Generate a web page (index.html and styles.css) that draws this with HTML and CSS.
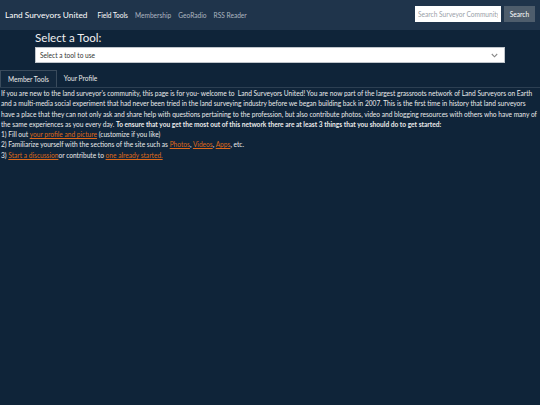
FILE: index.html
```html
<!DOCTYPE html>
<html>
<head>
<meta charset="utf-8">
<link rel="stylesheet" href="styles.css">
</head>
<body>
<nav class="navbar">
  <a class="brand" href="#">Land Surveyors United</a>
  <ul class="nav">
    <li class="active">Field Tools</li>
    <li>Membership</li>
    <li>GeoRadio</li>
    <li>RSS Reader</li>
  </ul>
  <form class="search">
    <input class="search-input" type="text" placeholder="Search Surveyor Community">
    <button class="search-btn" type="button">Search</button>
  </form>
</nav>
<section class="tool-picker">
  <h2 class="title">Select a Tool:</h2>
  <div class="select">
    <span class="select-label">Select a tool to use</span>
    <svg class="caret" width="7" height="5" viewBox="0 0 7 5"><path d="M0.8 1 L3.5 3.8 L6.2 1" fill="none" stroke="#888" stroke-width="1.1"/></svg>
  </div>
</section>
<div class="tabs">
  <div class="tab active">Member Tools</div>
  <div class="tab">Your Profile</div>
</div>
<div class="content">
  <p>If you are new to the land surveyor's community, this page is for you- welcome to&nbsp; Land Surveyors United! You are now part of the largest grassroots network of Land Surveyors on Earth and a multi-media social experiment that had never been tried in the land surveying industry before we began building back in 2007. This is the first time in history that land surveyors have a place that they can not only ask and share help with questions pertaining to the profession, but also contribute photos, video and blogging resources with others who have many of the same experiences as you every day. <strong>To ensure that you get the most out of this network there are at least 3 things that you should do to get started:</strong><br>
  1) Fill out <a href="#">your profile and picture</a> (customize if you like)<br>
  2) Familiarize yourself with the sections of the site such as <a href="#">Photos</a>, <a href="#">Videos</a>, <a href="#">Apps</a>, etc.<br>
  3) <a href="#">Start a discussion</a>or contribute to <a href="#">one already started.</a></p>
</div>
</body>
</html>
```
FILE: styles.css
```css
html, body {
  margin: 0;
  padding: 0;
  background: #0f2439;
  color: #ebebeb;
  font-family: Lato, "Open Sans", sans-serif;
}
.navbar {
  height: 30px;
  background: #1f344b;
  display: flex;
  align-items: center;
  padding: 0 5px 0 5px;
  box-sizing: border-box;
}
.brand {
  color: #ffffff;
  text-decoration: none;
  font-size: 8.3px;
  margin-right: 10px;
}
.nav {
  list-style: none;
  margin: 0;
  padding: 0;
  display: flex;
  gap: 7px;
  font-size: 6.6px;
  color: #aeb6c0;
}
.nav .active {
  color: #ffffff;
}
.search {
  margin: 0 0 3px auto;
  display: flex;
  gap: 3px;
  align-items: center;
}
.search-input {
  width: 86px;
  height: 16px;
  box-sizing: border-box;
  border: none;
  padding: 0 3px;
  font-family: Lato, sans-serif;
  font-size: 6.6px;
  background: #fff;
}
.search-input::placeholder {
  color: #9aa0a8;
}
.search-btn {
  height: 16px;
  width: 31px;
  box-sizing: border-box;
  border: none;
  padding: 0;
  background: #4e5d6c;
  color: #ffffff;
  font-family: Lato, sans-serif;
  font-size: 6.6px;
}
.tool-picker {
  padding: 0 35px;
}
.title {
  margin: 0;
  padding-top: 0;
  font-size: 11.6px;
  font-weight: normal;
  line-height: 15px;
  color: #f0f0f0;
}
.select {
  margin-top: 2px;
  width: 470px;
  height: 16px;
  box-sizing: border-box;
  background: #fff;
  border: 1px solid #c0c6cc;
  display: flex;
  align-items: center;
  justify-content: space-between;
  padding: 0 6px 0 4px;
  color: #333;
}
.select-label {
  font-size: 6.6px;
}
.caret {
  display: block;
}
.tabs {
  display: flex;
  margin-top: 7px;
  height: 17px;
  border-bottom: 1px solid #2c3f52;
  font-size: 6.6px;
}
.tab {
  padding: 0 7px;
  line-height: 17px;
  color: #ebebeb;
}
.tab.active {
  border: 1px solid #3a4b5c;
  border-bottom: none;
  line-height: 16px;
  background: #13283d;
}
.content {
  padding: 0 1px;
}
.content p {
  margin: 0;
  font-size: 6.6px;
  line-height: 10.3px;
}
.content a {
  color: #df691a;
}
.content strong {
  font-weight: bold;
}
```
